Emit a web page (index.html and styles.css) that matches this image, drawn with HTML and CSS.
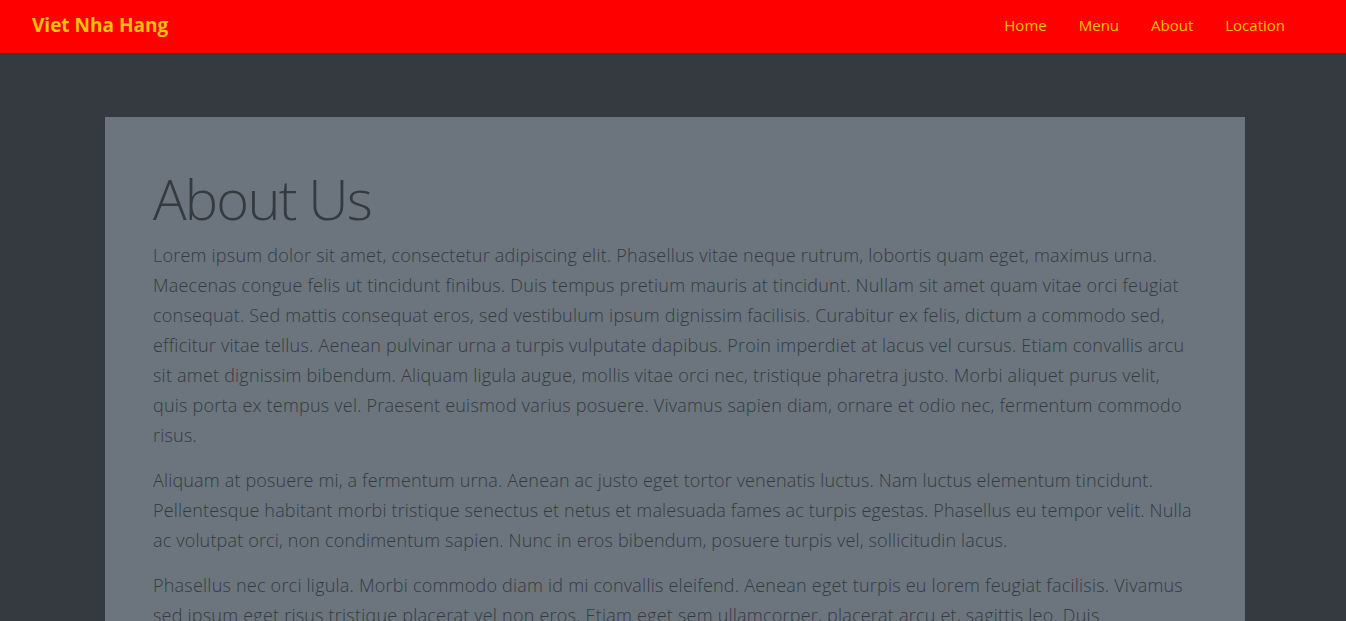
FILE: index.html
```html
<!DOCTYPE html>
<html lang="en">
<head>
<meta charset="utf-8">
<title>Viet Nha Hang - About</title>
<link rel="stylesheet" href="styles.css">
</head>
<body>
<nav class="navbar">
  <a class="brand" href="#">Viet Nha Hang</a>
  <ul class="nav-links">
    <li><a href="#">Home</a></li>
    <li><a href="#">Menu</a></li>
    <li><a href="#">About</a></li>
    <li><a href="#">Location</a></li>
  </ul>
</nav>
<main class="container">
  <section class="jumbotron">
    <h1 class="display">About Us</h1>
    <p class="lead">Lorem ipsum dolor sit amet, consectetur adipiscing elit. Phasellus vitae neque rutrum, lobortis quam eget, maximus urna. Maecenas congue felis ut tincidunt finibus. Duis tempus pretium mauris at tincidunt. Nullam sit amet quam vitae orci feugiat consequat. Sed mattis consequat eros, sed vestibulum ipsum dignissim facilisis. Curabitur ex felis, dictum a commodo sed, efficitur vitae tellus. Aenean pulvinar urna a turpis vulputate dapibus. Proin imperdiet at lacus vel cursus. Etiam convallis arcu sit amet dignissim bibendum. Aliquam ligula augue, mollis vitae orci nec, tristique pharetra justo. Morbi aliquet purus velit, quis porta ex tempus vel. Praesent euismod varius posuere. Vivamus sapien diam, ornare et odio nec, fermentum commodo risus.</p>
    <p class="lead lead-tight">Aliquam at posuere mi, a fermentum urna. Aenean ac justo eget tortor venenatis luctus. Nam luctus elementum tincidunt. Pellentesque habitant morbi tristique senectus et netus et malesuada fames ac turpis egestas. Phasellus eu tempor velit. Nulla ac volutpat orci, non condimentum sapien. Nunc in eros bibendum, posuere turpis vel, sollicitudin lacus.</p>
    <p class="lead">Phasellus nec orci ligula. Morbi commodo diam id mi convallis eleifend. Aenean eget turpis eu lorem feugiat facilisis. Vivamus sed ipsum eget risus tristique placerat vel non eros. Etiam eget sem ullamcorper, placerat arcu et, sagittis leo. Duis condimentum, nisl vitae convallis consequat, nibh purus luctus nunc, a tincidunt lorem mi at enim. Donec vel sapien vitae magna pulvinar aliquet.</p>
  </section>
</main>
</body>
</html>
```
FILE: styles.css
```css
* { box-sizing: border-box; }
html, body { margin: 0; padding: 0; }
body {
  background: #343a40;
  font-family: "Open Sans", "Noto Sans", "Liberation Sans", sans-serif;
  color: #212529;
}
.navbar {
  background: #ff0000;
  height: 53px;
  display: flex;
  align-items: center;
  justify-content: space-between;
  padding: 0 45px 3px 32px;
}
.brand {
  color: #ffc107;
  font-weight: 700;
  font-size: 19px;
  text-decoration: none;
}
.nav-links {
  list-style: none;
  display: flex;
  margin: 0;
  padding: 0;
}
.nav-links a {
  display: block;
  padding: 8px 16px;
  color: #ffc107;
  font-size: 15px;
  text-decoration: none;
}
.container {
  width: 1140px;
  margin: 64px 0 0 calc(50% - 568px);
}
.jumbotron {
  background: #6c757d;
  padding: 48px 48px 32px;
  color: #343a40;
}
.display {
  font-size: 56px;
  font-weight: 300;
  line-height: 67px;
  margin: 0 0 8px;
  letter-spacing: -1.8px;
}
.lead {
  font-size: 18px;
  font-weight: 300;
  line-height: 30px;
  margin: 0 0 15px;
  letter-spacing: 0.22px;
}
.lead-tight {
  letter-spacing: 0.16px;
}
```
